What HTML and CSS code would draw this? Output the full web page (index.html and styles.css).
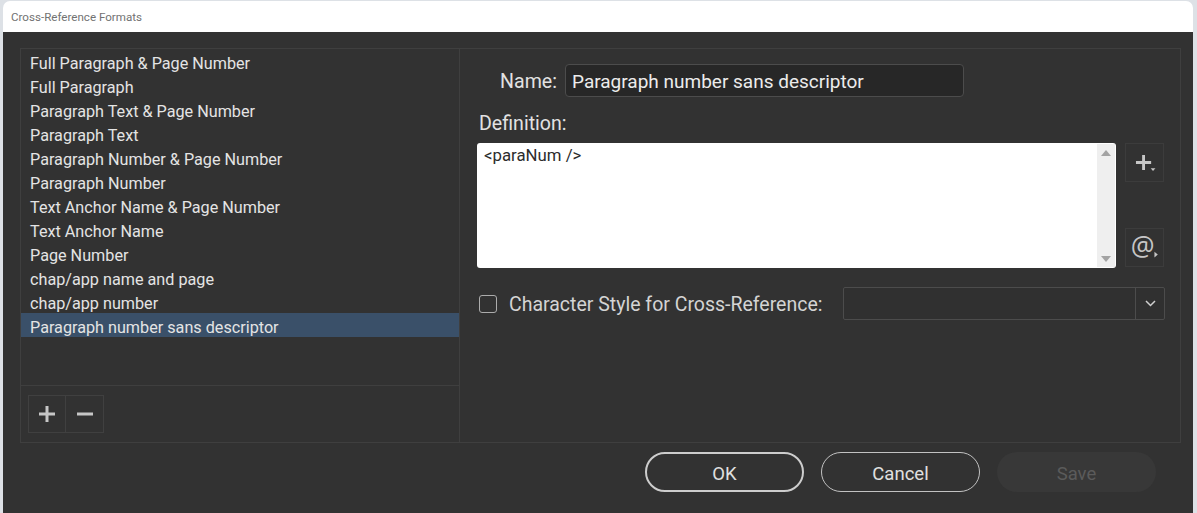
FILE: index.html
```html
<!DOCTYPE html>
<html lang="en">

<head>
    <meta charset="UTF-8">
    <meta name="viewport" content="width=device-width, initial-scale=1.0">
    <title>Cross-Reference Formats</title>
    <link rel="stylesheet" href="styles.css">
</head>

<body>
    <div class="window">
        <div class="titlebar">Cross-Reference Formats</div>

        <div class="dialog">
            <div class="panes">
                <!-- Format list -->
                <div class="formats">
                    <ul class="format-list">
                        <li>Full Paragraph &amp; Page Number</li>
                        <li>Full Paragraph</li>
                        <li>Paragraph Text &amp; Page Number</li>
                        <li>Paragraph Text</li>
                        <li>Paragraph Number &amp; Page Number</li>
                        <li>Paragraph Number</li>
                        <li>Text Anchor Name &amp; Page Number</li>
                        <li>Text Anchor Name</li>
                        <li>Page Number</li>
                        <li>chap/app name and page</li>
                        <li>chap/app number</li>
                        <li class="selected">Paragraph number sans descriptor</li>
                    </ul>
                    <div class="list-tools">
                        <button class="tool">
                            <svg width="18" height="18" viewBox="0 0 18 18"><path d="M9 1v16M1 9h16" stroke="#c6c6c6" stroke-width="3"/></svg>
                        </button>
                        <button class="tool">
                            <svg width="18" height="18" viewBox="0 0 18 18"><path d="M1 9h16" stroke="#c6c6c6" stroke-width="3"/></svg>
                        </button>
                    </div>
                </div>

                <!-- Format editor -->
                <div class="editor">
                    <div class="name-row">
                        <label class="field-label">Name:</label>
                        <div class="name-field">Paragraph number sans descriptor</div>
                    </div>

                    <div class="def-label">Definition:</div>
                    <div class="def-row">
                        <div class="def-box">
                            <div class="def-text">&lt;paraNum /&gt;</div>
                            <div class="def-scroll">
                                <svg width="10" height="6" viewBox="0 0 10 6"><path d="M0 6L5 0L10 6Z" fill="#a3a3a3"/></svg>
                                <svg width="10" height="6" viewBox="0 0 10 6"><path d="M0 0L5 6L10 0Z" fill="#a3a3a3"/></svg>
                            </div>
                        </div>
                        <div class="def-tools">
                            <button class="tool small">
                                <svg width="39" height="39" viewBox="0 0 39 39">
                                    <path d="M18.5 11.5v16M10.5 19.5h16" stroke="#c6c6c6" stroke-width="3"/>
                                    <path d="M26 25.5h5l-2.5 3z" fill="#c6c6c6"/>
                                </svg>
                            </button>
                            <button class="tool small">
                                <svg width="39" height="39" viewBox="0 0 39 39">
                                    <text x="17.5" y="28" text-anchor="middle" font-size="28" fill="#c6c6c6" font-family="'Open Sans', sans-serif">@</text>
                                    <path d="M30 24v6l3.5-3z" fill="#c6c6c6"/>
                                </svg>
                            </button>
                        </div>
                    </div>

                    <div class="style-row">
                        <span class="checkbox"></span>
                        <span class="style-label">Character Style for Cross-Reference:</span>
                        <div class="select">
                            <span class="select-value"></span>
                            <span class="select-arrow">
                                <svg width="11" height="7" viewBox="0 0 11 7"><path d="M1 1l4.5 4.5L10 1" fill="none" stroke="#cfcfcf" stroke-width="1.5"/></svg>
                            </span>
                        </div>
                    </div>
                </div>
            </div>

            <div class="actions">
                <button class="btn default">OK</button>
                <button class="btn">Cancel</button>
                <button class="btn disabled">Save</button>
            </div>
        </div>
    </div>
</body>

</html>
```

FILE: styles.css
```css
* {
    box-sizing: border-box;
}

html,
body {
    margin: 0;
}

body {
    background: #dde1e6;
    font-family: Roboto, "Noto Sans", sans-serif;
    overflow: hidden;
}

.window {
    margin: 1px 0 0 3px;
    width: 1190px;
    height: 512px;
    background: #fff;
    border-radius: 7px 7px 0 0;
    overflow: hidden;
    display: flex;
    flex-direction: column;
}

.titlebar {
    height: 31px;
    padding-left: 8px;
    display: flex;
    align-items: center;
    font-size: 11.6px;
    color: #727272;
}

.dialog {
    flex: 1;
    background: #323232;
    padding: 16px 12px 0 17px;
    color: #e2e2e2;
}

.panes {
    display: grid;
    grid-template-columns: 439px 1fr;
    height: 395px;
    border: 1px solid #3f3f3f;
}

/* list of formats */
.formats {
    border-right: 1px solid #3f3f3f;
    display: flex;
    flex-direction: column;
}

.format-list {
    list-style: none;
    margin: 0;
    padding: 0;
    height: 337px;
    border-bottom: 1px solid #3f3f3f;
}

.format-list li {
    height: 24px;
    padding: 3px 0 0 9px;
    line-height: 24px;
    font-size: 16.2px;
    color: #e4e4e4;
    white-space: nowrap;
}

.format-list li.selected {
    background: #3a5069;
}

.list-tools {
    display: flex;
    padding: 9px 0 0 7px;
}

.tool {
    width: 38px;
    height: 38px;
    padding: 0;
    border: 1px solid #404040;
    background: transparent;
    display: flex;
    align-items: center;
    justify-content: center;
}

.tool + .tool {
    border-left: none;
}

/* editor side */
.editor {
    padding: 15px 15px 0 17px;
    display: flex;
    flex-direction: column;
}

.name-row {
    display: flex;
    align-items: center;
    gap: 8px;
}

.field-label {
    width: 80px;
    padding-top: 2px;
    text-align: right;
    font-size: 19.6px;
}

.name-field {
    width: 399px;
    height: 33px;
    padding: 2px 0 0 6px;
    border: 1px solid #4c4c4c;
    border-radius: 4px;
    background: #272727;
    font-size: 19px;
    line-height: 29px;
    color: #ececec;
}

.def-label {
    margin: 15px 0 7px 2px;
    font-size: 19.6px;
    line-height: 24px;
}

.def-row {
    display: flex;
    gap: 9px;
}

.def-box {
    width: 639px;
    height: 125px;
    background: #fff;
    border-radius: 3px;
    display: flex;
}

.def-text {
    flex: 1;
    padding: 2px 7px;
    font-size: 16.8px;
    color: #2c2c2c;
}

.def-scroll {
    width: 18px;
    margin: 1px 1px 1px 0;
    padding: 6px 0 5px;
    background: #efefef;
    display: flex;
    flex-direction: column;
    justify-content: space-between;
    align-items: center;
}

.def-tools {
    display: flex;
    flex-direction: column;
    justify-content: space-between;
    padding-bottom: 1px;
}

.tool.small {
    width: 39px;
    height: 39px;
    border: 1px solid #3c3c3c;
}

.style-row {
    margin-top: 19px;
    display: flex;
    align-items: center;
}

.checkbox {
    width: 18px;
    height: 18px;
    margin: 0 12px 0 2px;
    border: 1.5px solid #acacac;
    border-radius: 3px;
}

.style-label {
    padding-top: 2px;
    font-size: 19.5px;
    color: #d4d4d4;
}

.select {
    margin-left: auto;
    width: 322px;
    height: 33px;
    border: 1px solid #4c4c4c;
    border-radius: 2px;
    background: #303030;
    display: flex;
}

.select-value {
    flex: 1;
}

.select-arrow {
    width: 29px;
    border-left: 1px solid #4c4c4c;
    display: flex;
    align-items: center;
    justify-content: center;
}

/* bottom buttons */
.actions {
    margin-top: 9px;
    padding-right: 25px;
    display: flex;
    justify-content: flex-end;
    gap: 17px;
}

.btn {
    width: 159px;
    height: 40px;
    padding: 3px 0 0;
    border: 1.5px solid #c2c2c2;
    border-radius: 20px;
    background: transparent;
    font-family: Roboto, "Noto Sans", sans-serif;
    font-size: 18.5px;
    color: #e0e0e0;
}

.btn.default {
    border: 2.5px solid #cdcdcd;
}

.btn.disabled {
    border: none;
    background: #383838;
    color: #5b5b5b;
}
```
